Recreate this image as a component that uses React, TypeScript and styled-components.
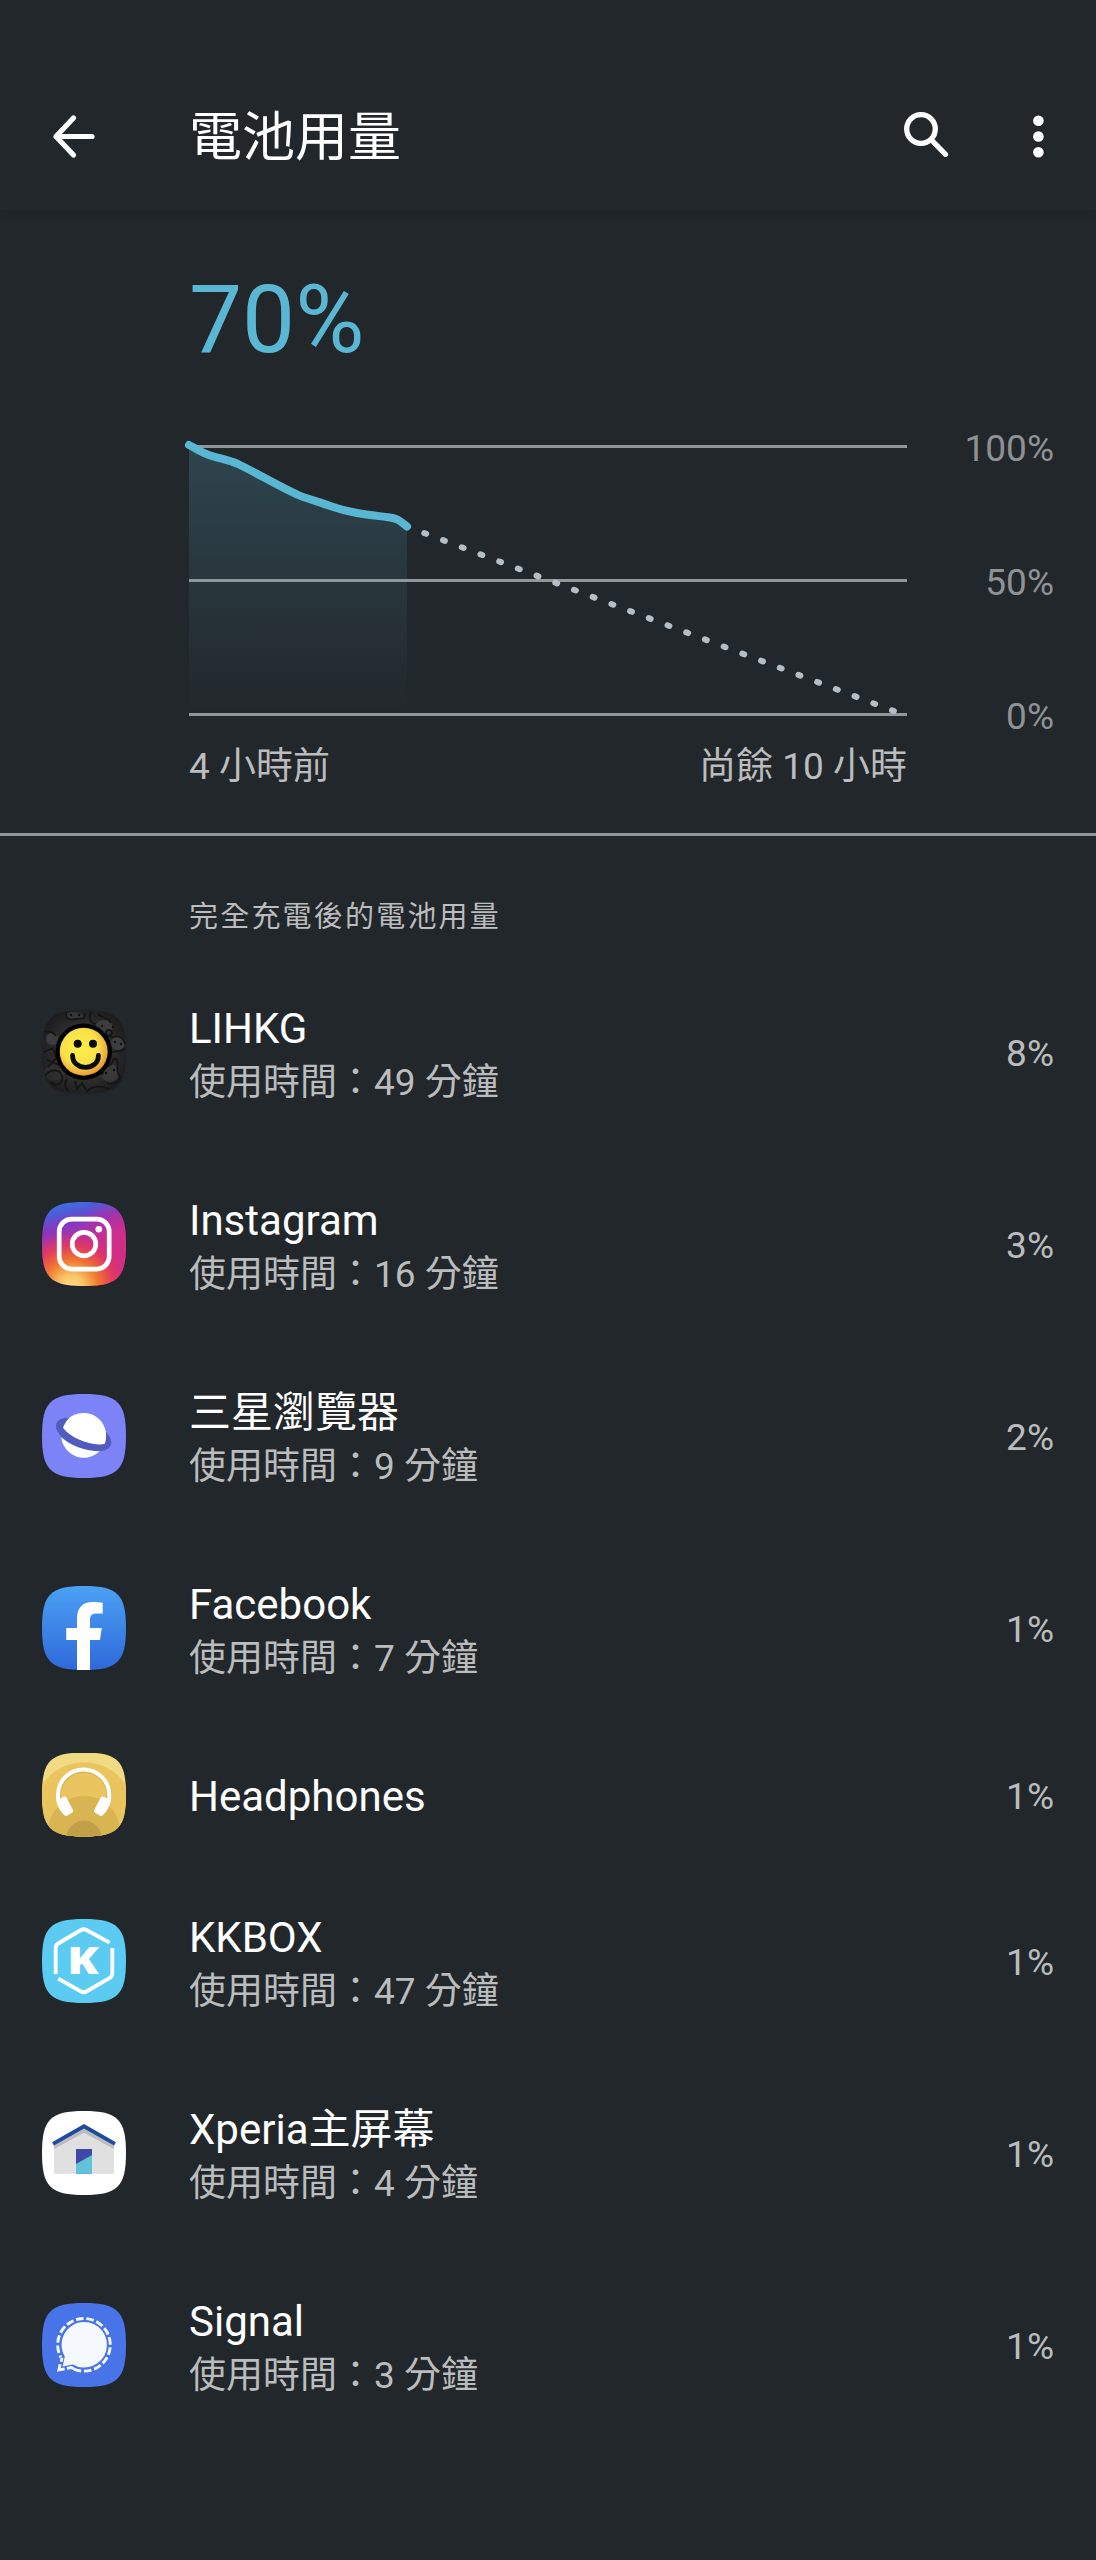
import React from 'react'
import styled, { createGlobalStyle } from 'styled-components'

const colors = {
  bg: '#22272b',
  accent: '#5ab7d4',
  line: '#919699',
  primary: '#ffffff',
  secondary: '#bbbcbd',
  axis: '#8f9295',
  projection: '#b3bec6',
}

const GlobalStyle = createGlobalStyle`
  body {
    margin: 0;
    background: ${colors.bg};
    font-family: Roboto, 'Noto Sans CJK TC', sans-serif;
    font-weight: 400;
  }
`

const Screen = styled.main`
  display: flex;
  flex-direction: column;
  width: 1096px;
  height: 2560px;
  overflow: hidden;
  background: ${colors.bg};
  color: ${colors.primary};
`

const Toolbar = styled.header`
  box-sizing: border-box;
  flex: none;
  display: flex;
  align-items: center;
  height: 210px;
  padding: 63px 32px 0 42px;
  box-shadow: 0 2px 8px rgba(30, 28, 26, 0.45);
`

const Title = styled.h1`
  flex: 1;
  margin: 0;
  padding-top: 3px;
  font-size: 53px;
  line-height: 72px;
  font-weight: 400;
`

const IconButton = styled.button<{ $gap: number }>`
  display: flex;
  width: 63px;
  height: 63px;
  margin: 0 ${(props) => props.$gap}px 0 0;
  padding: 0;
  border: 0;
  background: none;
  color: inherit;
`

const Summary = styled.section`
  box-sizing: border-box;
  flex: none;
  height: 626px;
  padding: 55px 42px 0 189px;
  border-bottom: 3px solid ${colors.line};
`

const Level = styled.div`
  height: 111px;
  font-size: 94.5px;
  line-height: 110px;
  color: ${colors.accent};
`

const ChartRow = styled.div`
  display: flex;
  justify-content: space-between;
  margin-top: 69px;
`

const Plot = styled.svg`
  display: block;
  overflow: visible;
`

const Axis = styled.div`
  display: flex;
  flex-direction: column;
  justify-content: space-between;
  align-items: flex-end;
  margin: -18px 0 -22px;
  font-size: 37px;
  line-height: 43px;
  color: ${colors.axis};
`

const TimeLabels = styled.div`
  display: flex;
  justify-content: space-between;
  width: 718px;
  margin-top: 24px;
  font-size: 37px;
  line-height: 54px;
  color: ${colors.secondary};
`

const SectionTitle = styled.h2`
  flex: none;
  height: 120px;
  margin: 0;
  padding-left: 189px;
  font-size: 29px;
  line-height: 163px;
  font-weight: 400;
  letter-spacing: 2.2px;
  color: ${colors.secondary};
`

const AppList = styled.ul`
  margin: 0;
  padding: 0;
  list-style: none;
`

const AppRow = styled.li<{ $compact: boolean }>`
  display: flex;
  align-items: center;
  height: ${(props) => (props.$compact ? 141 : 192)}px;
  padding: 0 42px;
`

const AppText = styled.div<{ $compact: boolean }>`
  flex: 1;
  margin-left: 63px;
  padding-top: ${(props) => (props.$compact ? 4 : 9)}px;
`

const AppName = styled.div`
  font-size: 42px;
  line-height: 50px;
`

const AppUsage = styled.div`
  margin-top: 2px;
  font-size: 37px;
  line-height: 54px;
  color: ${colors.secondary};
`

const Percent = styled.div<{ $compact: boolean }>`
  padding-top: ${(props) => (props.$compact ? 4 : 2)}px;
  font-size: 37px;
  line-height: 43px;
  color: ${colors.secondary};
`

const SQUIRCLE = 'M42 0C8.4 0 0 8.4 0 42s8.4 42 42 42 42-8.4 42-42S75.6 0 42 0Z'

const IconSvg = styled.svg`
  flex: none;
  display: block;
  width: 84px;
  height: 84px;
  clip-path: path('${SQUIRCLE}');
`

const BackIcon = () => (
  <svg width='63' height='63' viewBox='0 0 63 63' fill='none' stroke='currentColor' strokeWidth='5.2' strokeLinecap='round' strokeLinejoin='round'>
    <path d='M50 31.5H14M31.5 13 14 31.5 31.5 50' />
  </svg>
)

const SearchIcon = () => (
  <svg width='63' height='63' viewBox='0 0 63 63' fill='none' stroke='currentColor' strokeWidth='5.3' strokeLinecap='round'>
    <circle cx='27' cy='24' r='14.3' />
    <path d='M37.5 35 51.5 49.3' />
  </svg>
)

const MoreIcon = () => (
  <svg width='63' height='63' viewBox='0 0 63 63' fill='currentColor'>
    <circle cx='37.4' cy='15.7' r='5.3' />
    <circle cx='37.4' cy='31.5' r='5.3' />
    <circle cx='37.4' cy='47.3' r='5.3' />
  </svg>
)

const LihkgIcon = () => (
  <IconSvg viewBox='0 0 84 84'>
    <defs>
      <radialGradient id='lihkg-face' cx='.42' cy='.4' r='.62'>
        <stop offset='0' stopColor='#fcf04a' />
        <stop offset='.6' stopColor='#f9e148' />
        <stop offset='1' stopColor='#e59a35' />
      </radialGradient>
      <radialGradient id='lihkg-bg' cx='.5' cy='.5' r='.62'>
        <stop offset='.4' stopColor='#333333' />
        <stop offset='1' stopColor='#181818' />
      </radialGradient>
    </defs>
    <rect width='84' height='84' fill='url(#lihkg-bg)' />
    <g fill='#3d3d3d'>
      <ellipse cx='10' cy='29' rx='6' ry='6' />
      <ellipse cx='62' cy='17' rx='9' ry='7' />
      <ellipse cx='76' cy='33' rx='7' ry='7' />
      <ellipse cx='68' cy='63' rx='9' ry='9' opacity='.8' />
      <ellipse cx='32' cy='6' rx='9' ry='4' opacity='.7' />
      <ellipse cx='12' cy='63' rx='10' ry='8' opacity='.4' />
    </g>
    <g fill='none' stroke='#151515' strokeWidth='1.8'>
      <path d='M24 2c-1 8 4 8 10 7s9 1 9-6M49 2c-3 6 0 12 5 12M56 4c4 4 10 3 13 9M3 22c4-1 8 0 11 4M2 42l9-4 3 10-8 9M5 50l12 5M3 66c6-8 16-7 17 1s-8 10-11 5M25 69c-3 5-2 9 2 12M33 71l2 8 5-6 4 7M44 82c6-7 16-6 23-3M60 65c2-5 1-9 6-9s4-9 8-7-1 11 3 16-5 11-12 8' />
      <path d='M69 28c7-4 13 0 14 6M70 42c4-1 9 0 13-3' />
      <circle cx='67' cy='23' r='3' />
    </g>
    <g fill='#101010'>
      <circle cx='29' cy='5' r='1.2' />
      <circle cx='37' cy='5' r='1.2' />
      <circle cx='60' cy='16' r='1.2' />
      <circle cx='71' cy='17' r='1.2' />
      <circle cx='73' cy='32' r='1.2' />
      <circle cx='79' cy='34' r='1.2' />
      <circle cx='64' cy='63' r='1.2' />
      <circle cx='72' cy='60' r='1.2' />
    </g>
    <circle cx='41.7' cy='41.7' r='28.3' fill='#000' />
    <circle cx='41.7' cy='41.7' r='24' fill='url(#lihkg-face)' />
    <circle cx='35.7' cy='33.7' r='4' fill='#0a0a0a' />
    <circle cx='51' cy='33.7' r='4' fill='#0a0a0a' />
    <path d='M30.6 45.4c0 16 25.8 16 25.8 0' fill='none' stroke='#0a0a0a' strokeWidth='4.8' strokeLinecap='round' />
  </IconSvg>
)

const InstagramIcon = () => (
  <IconSvg viewBox='0 0 84 84'>
    <defs>
      <linearGradient id='ig-base' x1='.2' y1='0' x2='.45' y2='1'>
        <stop offset='0' stopColor='#3a74e0' />
        <stop offset='.13' stopColor='#4f5cd8' />
        <stop offset='.28' stopColor='#8538c0' />
        <stop offset='.5' stopColor='#b232a0' />
        <stop offset='1' stopColor='#d62e7c' />
      </linearGradient>
      <radialGradient id='ig-pink' cx='1' cy='.65' r='.7'>
        <stop offset='0' stopColor='#d32d80' />
        <stop offset='.5' stopColor='#cf2d8c' stopOpacity='.8' />
        <stop offset='1' stopColor='#c0309a' stopOpacity='0' />
      </radialGradient>
      <radialGradient id='ig-warm' cx='.35' cy='1.02' r='.68'>
        <stop offset='0' stopColor='#fae190' />
        <stop offset='.22' stopColor='#f9c566' />
        <stop offset='.48' stopColor='#f1782e' />
        <stop offset='.75' stopColor='#e63a5a' stopOpacity='.85' />
        <stop offset='1' stopColor='#d82f78' stopOpacity='0' />
      </radialGradient>
    </defs>
    <rect width='84' height='84' fill='url(#ig-base)' />
    <rect width='84' height='84' fill='url(#ig-pink)' />
    <rect width='84' height='84' fill='url(#ig-warm)' />
    <g fill='none' stroke='#fff' strokeWidth='4.7'>
      <rect x='17.2' y='17.1' width='50' height='50' rx='12.5' />
      <circle cx='42' cy='42.1' r='11.8' />
    </g>
    <circle cx='56.8' cy='27.3' r='3.3' fill='#fff' />
  </IconSvg>
)

const SamsungIcon = () => (
  <IconSvg viewBox='0 0 84 84'>
    <rect width='84' height='84' fill='#7b83f7' />
    <path d='M27 24.2C14 23 9.5 33 19.5 42.5C29 52 45 58 58 57C70.5 56 73 48 64 38.3Z' fill='#515bbd' />
    <path d='M19.4 43.5C29 52 43 57.2 57.5 57.2A22.4 22.4 0 0 1 19.4 43.5Z' fill='#fff' />
    <path d='M21 33.8C25 22.5 33 19 41.7 19C54.5 19 64.1 29.5 64.1 41.4C64.1 45 63.6 47 62.7 50C49 52.5 29 44.5 21 33.8Z' fill='#fff' />
  </IconSvg>
)

const FacebookIcon = () => (
  <IconSvg viewBox='0 0 84 84'>
    <defs>
      <linearGradient id='fb-bg' x1='0' y1='0' x2='0' y2='1'>
        <stop offset='0' stopColor='#4ba1f4' />
        <stop offset='1' stopColor='#2f69da' />
      </linearGradient>
    </defs>
    <rect width='84' height='84' fill='url(#fb-bg)' />
    <path d='M35 84V54H24.2V42H35V32.5C35 21.5 41 16 50.5 16C54.5 16 58 16.3 60.7 16.7V27.5H54.5C50 27.5 48 29.5 48 33.5V42H59.8L58 54H48V84Z' fill='#fff' />
  </IconSvg>
)

const HeadphonesIcon = () => (
  <IconSvg viewBox='0 0 84 84'>
    <rect width='84' height='84' fill='#f0db82' />
    <circle cx='42' cy='59.5' r='50.2' fill='#e9c45f' />
    <circle cx='42' cy='78.7' r='36' fill='#d8b452' />
    <circle cx='42' cy='85.5' r='17.8' fill='#c29f49' />
    <path d='M16.5 46V42.5a25 25 0 0 1 50.4 0V46' fill='none' stroke='#a07c28' strokeOpacity='.22' strokeWidth='5' />
    <path d='M16 46V42a25.6 25.6 0 0 1 51.2 0V46' fill='none' stroke='#fff' strokeWidth='4' />
    <g fill='#fff'>
      <path d='M14 44C14.3 52 17.5 57.5 22.5 62.3Q24 63.6 25.5 62.6L30.3 59.5Q31.8 58.5 31 57L24.4 44.6Q23.5 43.1 22 43.7L18 45.5Z' />
      <path d='M69.2 44C68.9 52 65.7 57.5 60.7 62.3Q59.2 63.6 57.7 62.6L52.9 59.5Q51.4 58.5 52.2 57L58.8 44.6Q59.7 43.1 61.2 43.7L65.2 45.5Z' />
    </g>
  </IconSvg>
)

const KMark = styled.text`
  font-family: 'Open Sans', sans-serif;
  font-size: 37.5px;
  font-weight: 800;
  fill: #fff;
`

const KkboxIcon = () => (
  <IconSvg viewBox='0 0 84 84'>
    <rect width='84' height='84' fill='#5ccbf2' />
    <g fill='none' stroke='#fff' strokeWidth='3.8'>
      <path d='M13.7 55V29Q13.7 26 16.2 24.5L39 11Q41.7 9.5 44.4 11L67.6 23.7' />
      <path d='M70.3 29V54.5Q70.3 57.3 67.8 58.8L44.4 72.5Q41.7 74 39 72.5L16.3 59.7' />
    </g>
    <KMark x='25.2' y='55.1' textLength='31.5' lengthAdjust='spacingAndGlyphs'>K</KMark>
  </IconSvg>
)

const XperiaHomeIcon = () => (
  <IconSvg viewBox='0 0 84 84'>
    <rect width='84' height='84' fill='#fff' />
    <path d='M12 33 42 16.5 72 33V62.7H12Z' fill='#e0e0e0' />
    <path d='M12 33 42 16.5 72 33V38L42 21.7 12 38Z' fill='#bdbdbd' />
    <path d='M34 38H50V62.7H34Z' fill='#3f48a6' />
    <path d='M34 53 50 44V62.7H34Z' fill='#60c3d8' />
    <path d='M11 32.8 42 15.3 73 32.8' fill='none' stroke='#1f4b9f' strokeWidth='3.8' />
  </IconSvg>
)

const SignalIcon = () => (
  <IconSvg viewBox='0 0 84 84'>
    <rect width='84' height='84' fill='#4974e7' />
    <path d='M42 19A22.8 22.8 0 1 1 30.7 61.5L20.7 63.5L22.8 53.5A22.8 22.8 0 0 1 42 19Z' fill='#f5f9fe' />
    {/* dashed outline, open at the bottom left where the bubble's tail sits */}
    <path
      d='M18.8 54.3A26.3 26.3 0 1 1 31.3 65.9'
      fill='none'
      stroke='#f5f9fe'
      strokeWidth='2.9'
      strokeDasharray='7.6 2.75'
      strokeDashoffset='5.6'
    />
    <path d='M20 54.8 19.2 58.8M18.1 61.2 16.9 66.9 22.7 65.9M24.9 65.4 29 64.5 31.9 65.6' fill='none' stroke='#f5f9fe' strokeWidth='2.9' />
  </IconSvg>
)

interface AppEntry {
  name: string
  usage?: string
  percent: string
  Icon: React.FC
}

const apps: AppEntry[] = [
  { name: 'LIHKG', usage: '使用時間：49 分鐘', percent: '8%', Icon: LihkgIcon },
  { name: 'Instagram', usage: '使用時間：16 分鐘', percent: '3%', Icon: InstagramIcon },
  { name: '三星瀏覽器', usage: '使用時間：9 分鐘', percent: '2%', Icon: SamsungIcon },
  { name: 'Facebook', usage: '使用時間：7 分鐘', percent: '1%', Icon: FacebookIcon },
  { name: 'Headphones', percent: '1%', Icon: HeadphonesIcon },
  { name: 'KKBOX', usage: '使用時間：47 分鐘', percent: '1%', Icon: KkboxIcon },
  { name: 'Xperia主屏幕', usage: '使用時間：4 分鐘', percent: '1%', Icon: XperiaHomeIcon },
  { name: 'Signal', usage: '使用時間：3 分鐘', percent: '1%', Icon: SignalIcon },
]

const CURVE = 'C6 3 12 7 18 9.2C28 13 38 14.5 49 19C65 26.5 90 41.5 108 49.5C113 52 130 57 140 60.5C150 64 154 65.5 168 68C180 70 190 71 201 72.5C209 73.5 211 76 218 81.5'

const UsageChart = () => (
  <Plot width='718' height='271' viewBox='0 0 718 271'>
    <defs>
      <linearGradient id='usage-fill' gradientUnits='userSpaceOnUse' x1='0' y1='0' x2='0' y2='268'>
        <stop offset='0' stopColor={colors.accent} stopOpacity='.21' />
        <stop offset='1' stopColor={colors.accent} stopOpacity='0' />
      </linearGradient>
    </defs>
    <g fill={colors.line}>
      <rect width='718' height='3' />
      <rect y='134' width='718' height='3' />
      <rect y='268' width='718' height='3' />
    </g>
    <path d={`M0 0${CURVE}V268H0Z`} fill='url(#usage-fill)' />
    <path
      d='M216.6 81 718 271'
      fill='none'
      stroke={colors.projection}
      strokeWidth='6'
      strokeLinecap='round'
      strokeDasharray='2 18.006'
    />
    <path d={`M0 0${CURVE}`} fill='none' stroke={colors.accent} strokeWidth='8' strokeLinecap='round' strokeLinejoin='round' />
  </Plot>
)

const App: React.FC = () => (
  <>
    <GlobalStyle />
    <Screen>
      <Toolbar>
        <IconButton $gap={84} aria-label='返回'>
          <BackIcon />
        </IconButton>
        <Title>電池用量</Title>
        <IconButton $gap={44} aria-label='搜尋'>
          <SearchIcon />
        </IconButton>
        <IconButton $gap={0} aria-label='更多選項'>
          <MoreIcon />
        </IconButton>
      </Toolbar>
      <Summary>
        <Level>70%</Level>
        <ChartRow>
          <UsageChart />
          <Axis>
            <span>100%</span>
            <span>50%</span>
            <span>0%</span>
          </Axis>
        </ChartRow>
        <TimeLabels>
          <span>4 小時前</span>
          <span>尚餘 10 小時</span>
        </TimeLabels>
      </Summary>
      <SectionTitle>完全充電後的電池用量</SectionTitle>
      <AppList>
        {apps.map(({ name, usage, percent, Icon }) => (
          <AppRow key={name} $compact={!usage}>
            <Icon />
            <AppText $compact={!usage}>
              <AppName>{name}</AppName>
              {usage && <AppUsage>{usage}</AppUsage>}
            </AppText>
            <Percent $compact={!usage}>{percent}</Percent>
          </AppRow>
        ))}
      </AppList>
    </Screen>
  </>
)

export default App
